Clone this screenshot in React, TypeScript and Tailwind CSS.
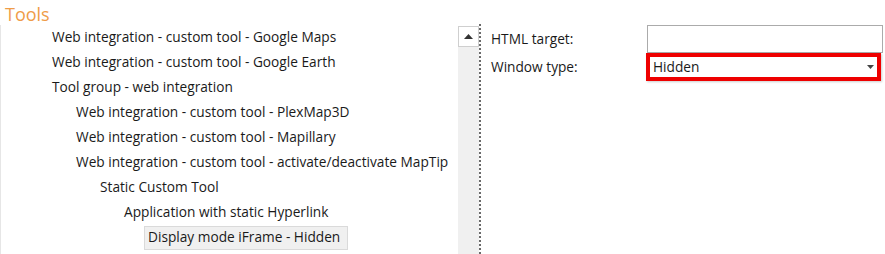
const items: { label: string; depth: number; selected?: boolean }[] = [
  { label: "Web integration - custom tool - Google Maps", depth: 0 },
  { label: "Web integration - custom tool - Google Earth", depth: 0 },
  { label: "Tool group - web integration", depth: 0 },
  { label: "Web integration - custom tool - PlexMap3D", depth: 1 },
  { label: "Web integration - custom tool - Mapillary", depth: 1 },
  { label: "Web integration - custom tool - activate/deactivate MapTip", depth: 1 },
  { label: "Static Custom Tool", depth: 2 },
  { label: "Application with static Hyperlink", depth: 3 },
  { label: "Display mode iFrame - Hidden", depth: 4, selected: true },
];

const indent = ["pl-[51px]", "pl-[75px]", "pl-[99px]", "pl-[123px]", "pl-[143px]"];

export default function App() {
  return (
    <div className="w-[885px] h-[254px] bg-white flex overflow-hidden text-[#1a1a1a] font-['Segoe_UI','Open_Sans',sans-serif] text-[13.7px]">
      <div className="w-[458px] flex flex-col shrink-0">
        <div className="h-[25px] pl-[5px] pt-[2px] text-[18px] leading-[25px] text-[#ef9c48]">Tools</div>
        <div className="flex-1 border-l border-[#e6e6e6] flex flex-col">
          {items.map((it) => (
            <div key={it.label} className={`h-[25px] flex items-center whitespace-nowrap ${indent[it.depth]}`}>
              {it.selected ? (
                <div className="h-[24px] pl-[3px] pr-[7px] flex items-center bg-[#f0f0f0] border border-[#dadada]">
                  {it.label}
                </div>
              ) : (
                it.label
              )}
            </div>
          ))}
        </div>
      </div>

      <div className="w-[21px] shrink-0 flex flex-col pt-[26px]">
        <div className="w-[21px] h-[21px] bg-white border border-[#cfcfcf] flex items-center justify-center">
          <svg width="9" height="5" viewBox="0 0 9 5">
            <path d="M4.5 0 L9 5 L0 5 Z" fill="#333" />
          </svg>
        </div>
        <div className="flex-1 bg-[#f0f0f0]" />
      </div>

      <div className="w-[4px] shrink-0 pt-[24px] flex">
        <div className="w-[3px] h-full border-l-[2px] border-dotted border-[#6a6a6a]" />
      </div>

      <div className="flex-1 pl-[8px] pt-[25px]">
        <div className="flex h-[28px] items-center">
          <div className="w-[156px]">HTML target:</div>
          <div className="w-[236px] h-[28px] border border-[#ababab] bg-white" />
        </div>
        <div className="flex h-[28px] items-center">
          <div className="w-[155px]">Window type:</div>
          <div className="w-[235px] h-[28px] border-[4px] border-[#ee0000] bg-white flex items-center pl-[3px] pr-[3px] shadow-[1px_1px_2px_rgba(0,0,0,0.2)]">
            <span className="flex-1">Hidden</span>
            <svg width="7" height="4" viewBox="0 0 7 4">
              <path d="M0 0 L7 0 L3.5 4 Z" fill="#444" />
            </svg>
          </div>
        </div>
      </div>
    </div>
  );
}
